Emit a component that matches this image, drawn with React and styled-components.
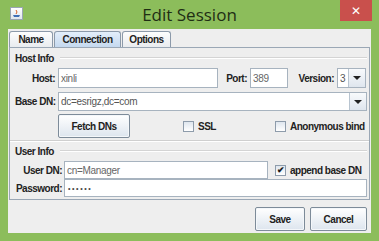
import React from 'react';
import styled, { createGlobalStyle } from 'styled-components';

const Global = createGlobalStyle`
  html, body { margin: 0; padding: 0; background: #8cbd5b; }
  body { width: 379px; height: 241px; overflow: hidden; }
`;

const Frame = styled.div`
  width: 379px;
  height: 241px;
  box-sizing: border-box;
  background: #8cbd5b;
  display: flex;
  flex-direction: column;
  padding: 0 8px 8px 8px;
`;

const TitleBar = styled.div`
  height: 29px;
  position: relative;
  display: flex;
  align-items: center;
  justify-content: center;
  font-family: "Open Sans", "Noto Sans", sans-serif;
  font-size: 17px;
  color: #1f2e14;
`;

const AppIcon = styled.div`
  position: absolute;
  left: 2px;
  top: 7px;
  width: 13px;
  height: 13px;
  background: linear-gradient(#ffffff, #dfe6ee);
  border: 1px solid #9aa6b3;
  box-sizing: border-box;
  display: flex;
  align-items: center;
  justify-content: center;
`;

const CloseBtn = styled.div`
  position: absolute;
  right: -1px;
  top: 0;
  width: 32px;
  height: 21px;
  background: #c9504c;
  color: #fff;
  font-family: "DejaVu Sans", sans-serif;
  font-size: 12px;
  font-weight: bold;
  display: flex;
  align-items: center;
  justify-content: center;
`;

const Client = styled.div`
  flex: 1;
  background: #eeeeee;
  display: flex;
  flex-direction: column;
  font-family: "Liberation Sans", Arial, sans-serif;
  font-size: 10px;
  letter-spacing: -0.5px;
  color: #222;
  white-space: nowrap;
`;

const Tabs = styled.div`
  display: flex;
  padding: 2px 0 0 1px;
  height: 16px;
  align-items: flex-end;
`;

const Tab = styled.div`
  box-sizing: border-box;
  width: ${p => p.w}px;
  height: 16px;
  border: 1px solid #8c9aaa;
  border-bottom: none;
  border-radius: 3px 3px 0 0;
  margin-right: 1px;
  background: ${p => (p.active ? 'linear-gradient(#e3eefa, #c5d9ef)' : 'linear-gradient(#fdfdfd, #e9ecef)')};
  font-weight: bold;
  display: flex;
  align-items: center;
  justify-content: center;
`;

const Panel = styled.div`
  flex: 1;
  border: 1px solid #9aa7b5;
  margin: 0 1px 0 1px;
  padding: 4px 2px 0 5px;
  display: flex;
  flex-direction: column;
`;

const SectionTitle = styled.div`
  display: flex;
  align-items: center;
  gap: 6px;
  font-weight: bold;
  height: 12px;
  margin-bottom: ${p => p.mb}px;
  &::after {
    content: '';
    flex: 1;
    border-top: 1px solid #d4d4d4;
    border-bottom: 1px solid #fff;
  }
`;

const Row = styled.div`
  display: flex;
  align-items: center;
  height: ${p => p.h}px;
  margin-bottom: ${p => p.mb || 0}px;
`;

const Label = styled.div`
  width: ${p => p.w}px;
  text-align: right;
  font-weight: bold;
  padding-right: ${p => (p.pr === undefined ? 3 : p.pr)}px;
  box-sizing: border-box;
  flex: none;
`;

const Input = styled.div`
  box-sizing: border-box;
  height: 100%;
  width: ${p => (p.w ? p.w + 'px' : 'auto')};
  flex: ${p => (p.w ? 'none' : 1)};
  background: #fff;
  border: 1px solid #a7b3bf;
  padding: 0 2px;
  display: flex;
  align-items: center;
  color: #666;
  letter-spacing: -0.3px;
`;

const Dots = styled.span`
  font-size: 7px;
  letter-spacing: 1.6px;
  color: #444;
  padding-left: 1px;
`;

const Combo = styled.div`
  box-sizing: border-box;
  height: 100%;
  width: ${p => (p.w ? p.w + 'px' : 'auto')};
  flex: ${p => (p.w ? 'none' : 1)};
  display: flex;
  background: #fff;
  border: 1px solid #a7b3bf;
`;

const ComboText = styled.div`
  flex: 1;
  padding: 0 2px;
  display: flex;
  align-items: center;
  color: #555;
  letter-spacing: -0.3px;
`;

const ArrowBtn = styled.div`
  width: 16px;
  flex: none;
  border-left: 1px solid #b8c4d0;
  background: linear-gradient(#f8fafc, #dfe6ee);
  display: flex;
  align-items: center;
  justify-content: center;
  &::after {
    content: '';
    border-left: 4px solid transparent;
    border-right: 4px solid transparent;
    border-top: 4px solid #222;
  }
`;

const Button = styled.div`
  box-sizing: border-box;
  width: ${p => p.w}px;
  height: ${p => p.h}px;
  border: 1px solid #7d8b99;
  border-radius: 2px;
  background: linear-gradient(#ffffff, #dde5ee);
  box-shadow: inset 0 0 0 1px #f4f7fa;
  font-weight: bold;
  display: flex;
  align-items: center;
  justify-content: center;
  flex: none;
`;

const Check = styled.div`
  display: flex;
  align-items: center;
  gap: 4px;
  font-weight: bold;
  margin-left: ${p => p.ml || 0}px;
  flex: none;
`;

const Box = styled.div`
  width: 11px;
  height: 11px;
  box-sizing: border-box;
  border: 1px solid #8e9cab;
  background: linear-gradient(#dfe6ee, #ffffff);
  display: flex;
  align-items: center;
  justify-content: center;
  font-size: 9px;
  line-height: 1;
  color: #1a1a1a;
`;

const Divider = styled.div`
  border-top: 1px solid #cfcfcf;
  border-bottom: 1px solid #fff;
  margin: ${p => p.m};
`;

const Footer = styled.div`
  height: 33px;
  box-sizing: border-box;
  display: flex;
  align-items: flex-start;
  justify-content: flex-end;
  gap: 5px;
  padding: 7px 4px 0 0;
`;

export default function App() {
  return (
    <>
      <Global />
      <Frame>
        <TitleBar>
          <AppIcon>
            <svg width="9" height="9" viewBox="0 0 9 9">
              <path d="M4 1 Q6 3 4 5" stroke="#d4622b" fill="none" strokeWidth="1" />
              <path d="M1 6 H8 L7 8 H2 Z" fill="#3f6fb5" />
            </svg>
          </AppIcon>
          Edit Session
          <CloseBtn>✕</CloseBtn>
        </TitleBar>
        <Client>
          <Tabs>
            <Tab w={44}>Name</Tab>
            <Tab w={67} active>Connection</Tab>
            <Tab w={49}>Options</Tab>
          </Tabs>
          <Panel>
            <SectionTitle mb={4}>Host Info</SectionTitle>
            <Row h={20} mb={4}>
              <Label w={43}>Host:</Label>
              <Input w={160}>xinli</Input>
              <Label w={32}>Port:</Label>
              <Input w={38}>389</Input>
              <Label w={49}>Version:</Label>
              <Combo w={29}>
                <ComboText>3</ComboText>
                <ArrowBtn />
              </Combo>
            </Row>
            <Row h={19} mb={3}>
              <Label w={43}>Base DN:</Label>
              <Combo>
                <ComboText>dc=esrigz,dc=com</ComboText>
                <ArrowBtn />
              </Combo>
            </Row>
            <Row h={24}>
              <Label w={43} />
              <Button w={72} h={24}>Fetch DNs</Button>
              <Check ml={53}><Box />SSL</Check>
              <Check ml={59}><Box />Anonymous bind</Check>
            </Row>
            <Divider m="2px -2px 3px -5px" />
            <SectionTitle mb={4}>User Info</SectionTitle>
            <Row h={18}>
              <Label w={49} pr={2}>User DN:</Label>
              <Input w={204}>cn=Manager</Input>
              <Check ml={7}><Box>✔</Box>append base DN</Check>
            </Row>
            <Row h={18}>
              <Label w={49} pr={2}>Password:</Label>
              <Input><Dots>••••••</Dots></Input>
            </Row>
          </Panel>
          <Footer>
            <Button w={50} h={24}>Save</Button>
            <Button w={57} h={24}>Cancel</Button>
          </Footer>
        </Client>
      </Frame>
    </>
  );
}
